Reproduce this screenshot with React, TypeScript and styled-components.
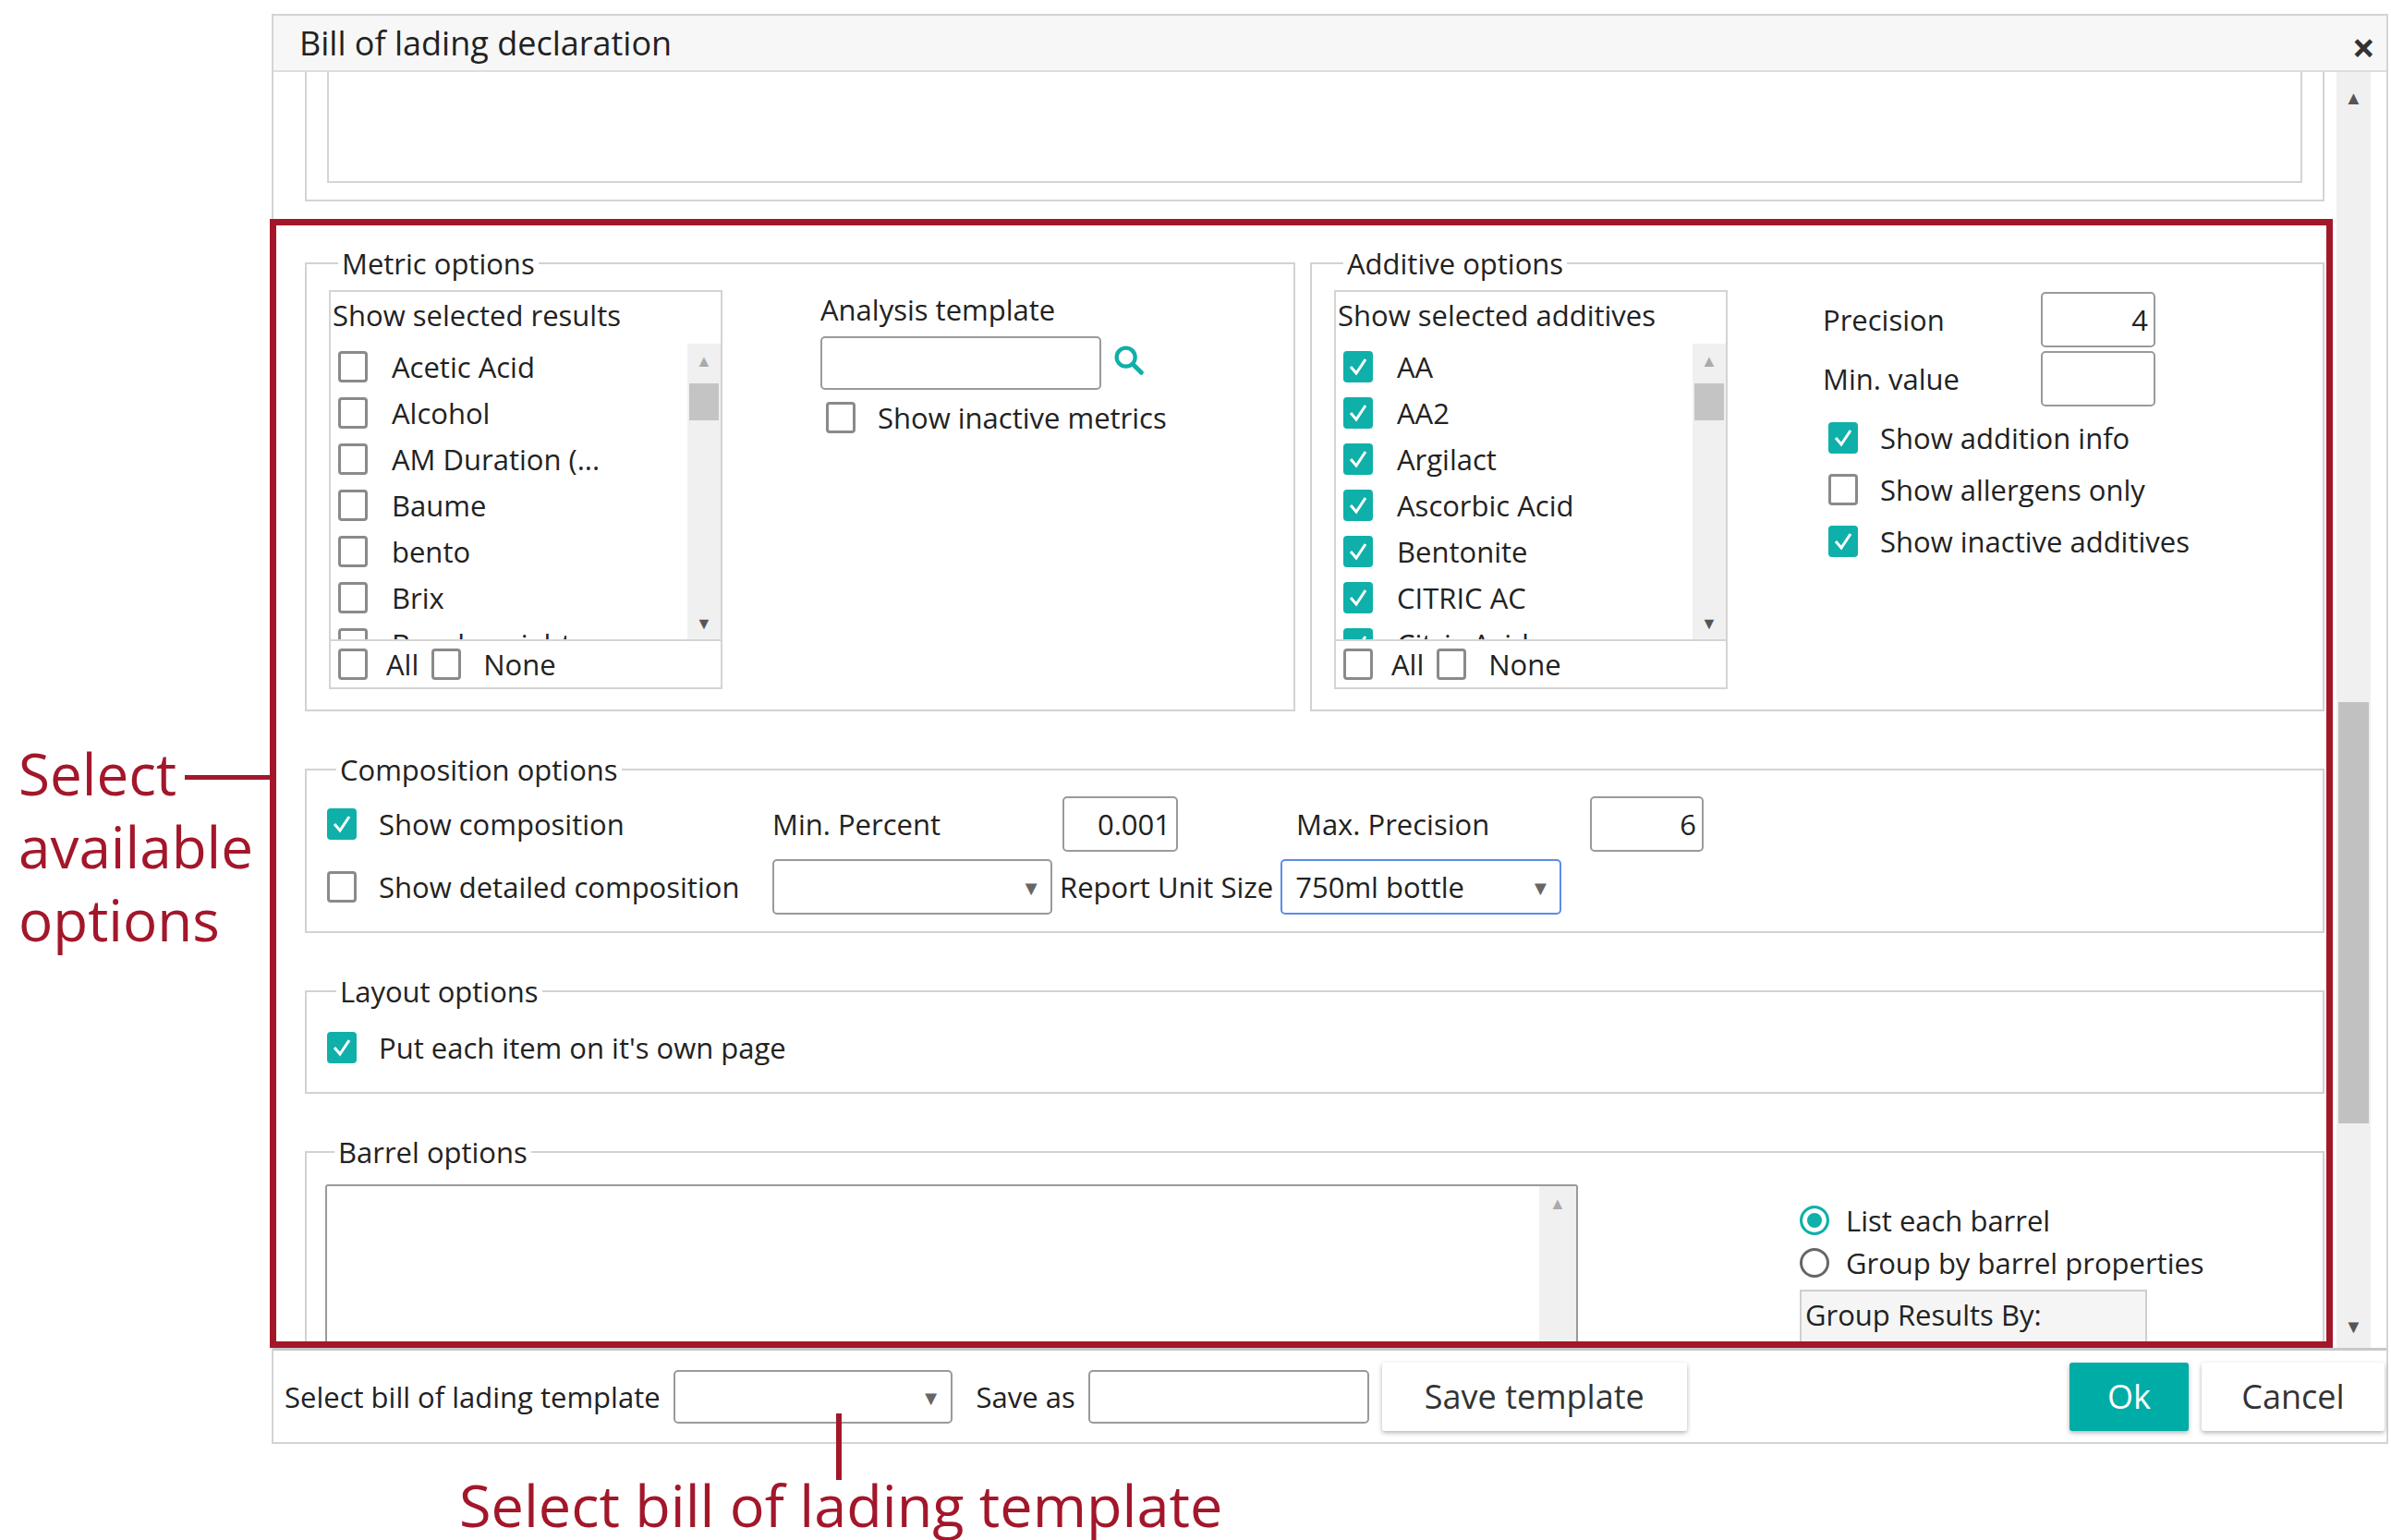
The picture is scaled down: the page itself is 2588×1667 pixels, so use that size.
import React from "react";
import styled, { createGlobalStyle } from "styled-components";

const GlobalStyle = createGlobalStyle`
  html, body { margin: 0; padding: 0; background: #fff; }
  body { font-family: "Open Sans", "Noto Sans", sans-serif; color: #222; }
  * { box-sizing: border-box; }
`;

const RED = "#a3172a";
const TEAL = "#0fb0a9";

const Page = styled.div`
  position: relative;
  width: 2588px;
  height: 1667px;
  padding: 15px 3px 0 294px;
`;

const Dialog = styled.div`
  width: 2291px;
  height: 1548px;
  border: 2px solid #d4d4d4;
  display: flex;
  flex-direction: column;
  background: #fff;
`;

const Header = styled.div`
  height: 61px;
  flex: none;
  background: #f7f7f7;
  border-bottom: 2px solid #dedede;
  display: flex;
  align-items: center;
  justify-content: space-between;
  padding: 0 12px 0 28px;
  font-size: 36px;
`;

const Close = styled.span`
  font-size: 44px;
  font-weight: 700;
  color: #333;
  line-height: 1;
  margin-top: 8px;
`;

const Body = styled.div`
  flex: none;
  height: 1381px;
  display: flex;
`;

const Content = styled.div`
  flex: 1;
  overflow: hidden;
  padding: 0 6px 0 34px;
  display: flex;
  flex-direction: column;
`;

const Scrollbar = styled.div`
  width: 37px;
  margin: 0 17px 0 7px;
  background: #f0f0f0;
  position: relative;
  display: flex;
  flex-direction: column;
  justify-content: space-between;
  align-items: center;
  padding: 14px 0 10px;
  color: #555;
  font-size: 20px;
`;

const Thumb = styled.div`
  position: absolute;
  left: 2px;
  right: 2px;
  top: 682px;
  height: 456px;
  background: #c1c1c1;
`;

const TopBox = styled.div`
  height: 140px;
  border: 2px solid #d4d4d4;
  border-top: none;
  padding: 0 22px 18px;
  flex: none;
`;

const TopInner = styled.div`
  height: 100%;
  border: 2px solid #d4d4d4;
  border-top: none;
`;

const Row = styled.div<{ $gap?: number }>`
  display: flex;
  gap: ${(p) => p.$gap ?? 0}px;
  align-items: flex-start;
`;

const Fieldset = styled.fieldset<{ $mt: number; $pad: string; $w?: number }>`
  margin: ${(p) => p.$mt}px 0 0;
  padding: ${(p) => p.$pad};
  border: 2px solid #d2d2d2;
  ${(p) => (p.$w ? `width: ${p.$w}px; flex: none;` : "flex: 1;")}
  min-width: 0;
`;

const Legend = styled.legend`
  font-size: 31px;
  padding: 0 4px;
  margin-left: 10px;
  color: #222;
`;

const ListBox = styled.div`
  width: 426px;
  height: 432px;
  border: 2px solid #d4d4d4;
  display: flex;
  flex-direction: column;
`;

const ListTitle = styled.div`
  font-size: 31px;
  height: 56px;
  padding: 4px 0 0 2px;
  flex: none;
  white-space: nowrap;
`;

const ListScroll = styled.div`
  flex: 1;
  display: flex;
  overflow: hidden;
`;

const ListItems = styled.div`
  flex: 1;
  padding: 0 0 0 8px;
  overflow: hidden;
`;

const ListBar = styled.div`
  width: 36px;
  background: #f0f0f0;
  position: relative;
  display: flex;
  flex-direction: column;
  justify-content: space-between;
  align-items: center;
  padding: 6px 0 6px;
  font-size: 18px;
  color: #aaa;
`;

const ListThumb = styled.div`
  position: absolute;
  top: 43px;
  left: 2px;
  right: 2px;
  height: 40px;
  background: #c4c4c4;
`;

const ListFooter = styled.div`
  height: 52px;
  border-top: 2px solid #d4d4d4;
  display: flex;
  align-items: center;
  padding-left: 8px;
  gap: 14px;
  flex: none;
  background: #fff;
`;

const CheckLine = styled.label<{ $h?: number; $gap?: number }>`
  display: flex;
  align-items: center;
  gap: ${(p) => p.$gap ?? 24}px;
  height: ${(p) => p.$h ?? 50}px;
  font-size: 31px;
  white-space: nowrap;
  flex: none;
`;

const Box = styled.span<{ $on: boolean }>`
  width: 32px;
  height: 34px;
  flex: none;
  border-radius: 4px;
  border: ${(p) => (p.$on ? "none" : "3px solid #8a8a8a")};
  background: ${(p) => (p.$on ? TEAL : "#fff")};
  display: flex;
  align-items: center;
  justify-content: center;
`;

const Check = ({ on }: { on: boolean }) => (
  <Box $on={on}>
    {on && (
      <svg width="22" height="22" viewBox="0 0 22 22">
        <path d="M3 11 L9 18 L19 3" fill="none" stroke="#fff" strokeWidth="3" />
      </svg>
    )}
  </Box>
);

const Label = styled.span<{ $w?: number }>`
  font-size: 31px;
  ${(p) => (p.$w ? `width: ${p.$w}px;` : "")}
  white-space: nowrap;
  flex: none;
`;

const TextInput = styled.div<{ $w: number; $h?: number; $blue?: boolean }>`
  width: ${(p) => p.$w}px;
  height: ${(p) => p.$h ?? 58}px;
  border: 2px solid ${(p) => (p.$blue ? "#5b8ee6" : "#9a9a9a")};
  border-radius: 5px;
  font-size: 31px;
  display: flex;
  align-items: center;
  justify-content: flex-end;
  padding: 0 6px;
  flex: none;
  background: #fff;
  white-space: nowrap;
`;

const Select = styled(TextInput)`
  justify-content: flex-start;
  padding: 0 10px 0 14px;
  &::after {
    content: "▼";
    margin-left: auto;
    font-size: 22px;
    color: #666;
  }
`;

const Col = styled.div<{ $w?: number; $ml?: number; $mt?: number }>`
  display: flex;
  flex-direction: column;
  ${(p) => (p.$w ? `width: ${p.$w}px;` : "")}
  margin-left: ${(p) => p.$ml ?? 0}px;
  margin-top: ${(p) => p.$mt ?? 0}px;
`;

const CompRow = styled.div<{ $mt?: number }>`
  display: flex;
  align-items: center;
  height: 60px;
  margin-top: ${(p) => p.$mt ?? 0}px;
`;

const Radio = styled.span<{ $on: boolean }>`
  width: 32px;
  height: 32px;
  border-radius: 50%;
  flex: none;
  border: 3px solid ${(p) => (p.$on ? TEAL : "#666")};
  box-shadow: ${(p) => (p.$on ? `inset 0 0 0 5px #fff` : "none")};
  background: ${(p) => (p.$on ? TEAL : "#fff")};
`;

const BarrelArea = styled.div`
  width: 1356px;
  height: 200px;
  border: 2px solid #9a9a9a;
  border-radius: 3px;
  display: flex;
  justify-content: flex-end;
  flex: none;
`;

const GroupBox = styled.div`
  width: 376px;
  height: 60px;
  border: 2px solid #cfcfcf;
  background: #f5f5f5;
  font-size: 31px;
  padding: 4px 4px;
  margin-top: 6px;
  white-space: nowrap;
`;

const Footer = styled.div`
  flex: 1;
  border-top: 3px solid #c8c8c8;
  display: flex;
  align-items: center;
  padding: 0 2px 0 12px;
  gap: 14px;
`;

const Button = styled.button<{ $primary?: boolean; $w: number }>`
  width: ${(p) => p.$w}px;
  height: 74px;
  border: none;
  border-radius: 3px;
  font-family: inherit;
  font-size: 36px;
  background: ${(p) => (p.$primary ? "#00aca6" : "#fff")};
  color: ${(p) => (p.$primary ? "#fff" : "#333")};
  box-shadow: 0 2px 5px rgba(0, 0, 0, 0.3);
  flex: none;
`;

const Spacer = styled.div`
  flex: 1;
`;

const RedFrame = styled.div`
  position: absolute;
  left: 292px;
  top: 237px;
  width: 2233px;
  height: 1222px;
  border: 7px solid ${RED};
  pointer-events: none;
`;

const SideNote = styled.div`
  position: absolute;
  left: 20px;
  top: 798px;
  font-size: 62px;
  line-height: 79px;
  color: ${RED};
`;

const SideLine = styled.div`
  position: absolute;
  left: 200px;
  top: 839px;
  width: 94px;
  height: 5px;
  background: ${RED};
`;

const BottomNote = styled.div`
  position: absolute;
  left: 497px;
  top: 1586px;
  font-size: 63px;
  color: ${RED};
`;

const BottomLine = styled.div`
  position: absolute;
  left: 905px;
  top: 1530px;
  width: 6px;
  height: 72px;
  background: ${RED};
`;

const metrics = ["Acetic Acid", "Alcohol", "AM Duration (...", "Baume", "bento", "Brix", "Bench weight"];
const additives = ["AA", "AA2", "Argilact", "Ascorbic Acid", "Bentonite", "CITRIC AC", "Citric Acid"];

const PickList = ({ title, items, on }: { title: string; items: string[]; on: boolean }) => (
  <ListBox>
    <ListTitle>{title}</ListTitle>
    <ListScroll>
      <ListItems>
        {items.map((t) => (
          <CheckLine key={t} $gap={26}>
            <Check on={on} />
            {t}
          </CheckLine>
        ))}
      </ListItems>
      <ListBar>
        <span>▲</span>
        <ListThumb />
        <span style={{ color: "#555" }}>▼</span>
      </ListBar>
    </ListScroll>
    <ListFooter>
      <CheckLine $gap={20}>
        <Check on={false} />
        All
      </CheckLine>
      <CheckLine $gap={24}>
        <Check on={false} />
        None
      </CheckLine>
    </ListFooter>
  </ListBox>
);

const SearchIcon = () => (
  <svg width="40" height="40" viewBox="0 0 24 24" style={{ marginLeft: 10, marginTop: 6 }}>
    <circle cx="10" cy="10" r="6" fill="none" stroke={TEAL} strokeWidth="2.6" />
    <path d="M14.5 14.5 L20 20" stroke={TEAL} strokeWidth="3" strokeLinecap="round" />
  </svg>
);

export default function App() {
  return (
    <Page>
      <GlobalStyle />
      <Dialog>
        <Header>
          Bill of lading declaration
          <Close>×</Close>
        </Header>
        <Body>
          <Content>
            <TopBox>
              <TopInner />
            </TopBox>
            <Row $gap={16}>
              <Fieldset $mt={46} $pad="8px 24px 22px" $w={1072}>
                <Legend>Metric options</Legend>
                <Row>
                  <PickList title="Show selected results" items={metrics} on={false} />
                  <Col $ml={106}>
                    <Label>Analysis template</Label>
                    <Row style={{ marginTop: 8 }}>
                      <TextInput $w={304} />
                      <SearchIcon />
                    </Row>
                    <CheckLine $h={60} style={{ marginLeft: 6 }}>
                      <Check on={false} />
                      Show inactive metrics
                    </CheckLine>
                  </Col>
                </Row>
              </Fieldset>
              <Fieldset $mt={46} $pad="8px 24px 22px">
                <Legend>Additive options</Legend>
                <Row>
                  <PickList title="Show selected additives" items={additives} on={true} />
                  <Col $ml={103}>
                    <Row style={{ alignItems: "center", height: 64 }}>
                      <Label $w={236}>Precision</Label>
                      <TextInput $w={124} $h={60}>4</TextInput>
                    </Row>
                    <Row style={{ alignItems: "center", height: 64 }}>
                      <Label $w={236}>Min. value</Label>
                      <TextInput $w={124} $h={60} />
                    </Row>
                    <Col $ml={6} $mt={4}>
                      <CheckLine $h={56}>
                        <Check on={true} />
                        Show addition info
                      </CheckLine>
                      <CheckLine $h={56}>
                        <Check on={false} />
                        Show allergens only
                      </CheckLine>
                      <CheckLine $h={56}>
                        <Check on={true} />
                        Show inactive additives
                      </CheckLine>
                    </Col>
                  </Col>
                </Row>
              </Fieldset>
            </Row>

            <Fieldset $mt={42} $pad="8px 22px 18px">
              <Legend>Composition options</Legend>
              <CompRow>
                <CheckLine $gap={24} style={{ width: 482 }}>
                  <Check on={true} />
                  Show composition
                </CheckLine>
                <Label $w={314}>Min. Percent</Label>
                <TextInput $w={125} $h={60}>0.001</TextInput>
                <Label $w={321} style={{ paddingLeft: 128 }}>Max. Precision</Label>
                <TextInput $w={123} $h={60} style={{ marginLeft: 125 }}>6</TextInput>
              </CompRow>
              <CompRow $mt={8}>
                <CheckLine $gap={24} style={{ width: 482 }}>
                  <Check on={false} />
                  Show detailed composition
                </CheckLine>
                <Select $w={303} $h={60} />
                <Label style={{ marginLeft: 8 }}>Report Unit Size</Label>
                <Select $w={304} $h={60} $blue style={{ marginLeft: 8 }}>
                  750ml bottle
                </Select>
              </CompRow>
            </Fieldset>

            <Fieldset $mt={42} $pad="10px 22px 18px">
              <Legend>Layout options</Legend>
              <CheckLine $h={60} $gap={24}>
                <Check on={true} />
                Put each item on it's own page
              </CheckLine>
            </Fieldset>

            <Fieldset $mt={42} $pad="14px 20px 0" style={{ borderBottom: "none" }}>
              <Legend>Barrel options</Legend>
              <Row>
                <BarrelArea>
                  <ListBar style={{ width: 40, justifyContent: "flex-start" }}>
                    <span>▲</span>
                  </ListBar>
                </BarrelArea>
                <Col $ml={240} $mt={16}>
                  <CheckLine $h={46} $gap={18}>
                    <Radio $on={true} />
                    List each barrel
                  </CheckLine>
                  <CheckLine $h={46} $gap={18}>
                    <Radio $on={false} />
                    Group by barrel properties
                  </CheckLine>
                  <GroupBox>Group Results By:</GroupBox>
                </Col>
              </Row>
            </Fieldset>
          </Content>
          <Scrollbar>
            <span>▲</span>
            <Thumb />
            <span>▼</span>
          </Scrollbar>
        </Body>
        <Footer>
          <Label>Select bill of lading template</Label>
          <Select $w={302} $h={58} />
          <Label style={{ marginLeft: 12 }}>Save as</Label>
          <TextInput $w={304} $h={58} />
          <Button $w={330}>Save template</Button>
          <Spacer />
          <Button $w={129} $primary>Ok</Button>
          <Button $w={198}>Cancel</Button>
        </Footer>
      </Dialog>

      <RedFrame />
      <SideNote>
        Select
        <br />
        available
        <br />
        options
      </SideNote>
      <SideLine />
      <BottomLine />
      <BottomNote>Select bill of lading template</BottomNote>
    </Page>
  );
}
